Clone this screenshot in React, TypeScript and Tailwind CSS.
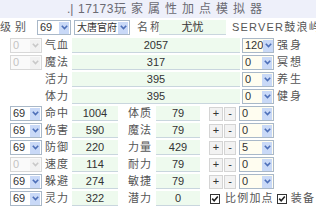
import type { ReactNode } from "react";

const font = { fontFamily: '"Liberation Sans", "Noto Sans CJK SC", sans-serif' };

function Arrow({ disabled = false }: { disabled?: boolean }) {
  return (
    <span
      className={`mr-[1px] flex h-[12px] w-[10px] shrink-0 items-center justify-center ${
        disabled ? "bg-[#f1f1f1]" : "bg-[#c9d9f7]"
      }`}
    >
      <svg width="7" height="5" viewBox="0 0 7 5">
        <path d="M0.8 0.8 L3.5 3.6 L6.2 0.8" fill="none" stroke={disabled ? "#c8c8c8" : "#4d6fb8"} strokeWidth="1.6" />
      </svg>
    </span>
  );
}

function Select({ value, w, disabled = false, cream = false, small = false }: { value: string; w: string; disabled?: boolean; cream?: boolean; small?: boolean }) {
  return (
    <div
      className={`flex h-[15px] shrink-0 items-center justify-between border ${w} ${
        disabled ? "border-[#d8d8d8] bg-[#fafafa] text-[#c4c4c4]" : cream ? "border-[#a9b8c8] bg-[#fffdf0] text-[#333]" : "border-[#a9b8c8] bg-white text-[#333]"
      }`}
    >
      <span className={`whitespace-nowrap pl-[2px] leading-none ${small ? "text-[10px]" : "text-[11px]"}`}>{value}</span>
      <Arrow disabled={disabled} />
    </div>
  );
}

function Field({ value, w, children }: { value?: string; w: string; children?: ReactNode }) {
  return (
    <div className={`flex h-[15px] shrink-0 items-center justify-center border-b border-[#c9d6de] bg-[#eefaee] text-[11px] leading-none text-[#333] ${w}`}>
      {children ?? value}
    </div>
  );
}

function Label({ text, w = "w-[27px]", pl = "pl-[3px]", track = "tracking-[1px]" }: { text: string; w?: string; pl?: string; track?: string }) {
  return <div className={`shrink-0 whitespace-nowrap text-[11px] leading-none text-[#555] ${track} ${w} ${pl}`}>{text}</div>;
}

function Btn({ t, w }: { t: string; w: string }) {
  return (
    <div className={`flex h-[14px] shrink-0 items-center justify-center border border-[#d4d4d4] bg-[#f2f2f2] text-[11px] leading-none text-[#333] ${w}`}>
      {t}
    </div>
  );
}

function Check() {
  return (
    <span className="flex h-[10px] w-[10px] shrink-0 items-center justify-center border border-[#333] bg-white">
      <svg width="8" height="8" viewBox="0 0 8 8">
        <path d="M1.2 3.6 L3.2 5.8 L6.8 1.6" fill="none" stroke="#222" strokeWidth="1.6" />
      </svg>
    </span>
  );
}

const topRows = [
  { sel: "0", label: "气血", value: "2057", right: "120", rlabel: "强身" },
  { sel: "0", label: "魔法", value: "317", right: "0", rlabel: "冥想" },
  { sel: "", label: "活力", value: "395", right: "0", rlabel: "养生" },
  { sel: "", label: "体力", value: "395", right: "0", rlabel: "健身" },
];

const bottomRows = [
  { sel: "69", label: "命中", value: "1004", label2: "体质", value2: "79", pick: "0" },
  { sel: "69", label: "伤害", value: "590", label2: "魔法", value2: "79", pick: "0" },
  { sel: "69", label: "防御", value: "220", label2: "力量", value2: "429", pick: "5" },
  { sel: "0", label: "速度", value: "114", label2: "耐力", value2: "79", pick: "0", off: true },
  { sel: "69", label: "躲避", value: "274", label2: "敏捷", value2: "79", pick: "0" },
];

const title = ["玩", "家", "属", "性", "加", "点", "模", "拟", "器"];

export default function App() {
  return (
    <div className="h-[206px] w-[316px] overflow-hidden bg-white" style={font}>
      <div className="flex h-[18px] items-center bg-[#eef0fa] pl-[67px] text-[12px] leading-none text-[#6a6a72]">
        <span className="w-[11px]">.|</span>
        <span className="tracking-[0.5px]">17173</span>
        <div className="flex gap-[5px]">
          {title.map((c) => (
            <span key={c}>{c}</span>
          ))}
        </div>
      </div>

      <div className="flex h-[19px] items-center">
        <Label text="级别" w="w-[37px]" pl="pl-0" track="tracking-[4px]" />
        <Select value="69" w="w-[34px]" />
        <div className="ml-[3px]">
          <Select value="大唐官府" w="w-[56px]" small />
        </div>
        <Label text="名称" w="w-[29px]" pl="pl-[7px]" track="tracking-[2px]" />
        <Field value="尤忧" w="w-[67px]" />
        <div className="ml-[6px] shrink-0 whitespace-nowrap text-[11px] leading-none tracking-[1.2px] text-[#555]">SERVER鼓浪屿</div>
      </div>

      {topRows.map((r) => (
        <div key={r.label} className="flex h-[17px] items-center pl-[10px]">
          {r.sel ? <Select value={r.sel} w="w-[32px]" disabled /> : <div className="w-[32px] shrink-0" />}
          <Label text={r.label} w="w-[30px]" />
          <Field value={r.value} w="w-[168px]" />
          <div className="ml-[2px]">
            <Select value={r.right} w="w-[32px]" cream />
          </div>
          <Label text={r.rlabel} w="w-[40px]" track="tracking-[2px]" />
        </div>
      ))}

      {bottomRows.map((r) => (
        <div key={r.label} className="flex h-[17px] items-center pl-[10px]">
          <Select value={r.sel} w="w-[32px]" disabled={r.off} />
          <Label text={r.label} w="w-[30px]" />
          <Field value={r.value} w="w-[46px]" />
          <Label text={r.label2} w="w-[38px]" pl="pl-[10px]" />
          <Field value={r.value2} w="w-[44px]" />
          <div className="ml-[9px] flex gap-[1px]">
            <Btn t="+" w="w-[14px]" />
            <Btn t="-" w="w-[12px]" />
          </div>
          <div className="ml-[3px]">
            <Select value={r.pick} w="w-[35px]" cream />
          </div>
        </div>
      ))}

      <div className="flex h-[17px] items-center pl-[10px]">
        <Select value="69" w="w-[32px]" />
        <Label text="灵力" w="w-[30px]" />
        <Field value="322" w="w-[46px]" />
        <Label text="潜力" w="w-[38px]" pl="pl-[10px]" />
        <Field value="0" w="w-[44px]" />
        <div className="ml-[10px] flex items-center whitespace-nowrap text-[11px] leading-none tracking-[1.2px] text-[#555]">
          <Check />
          <span className="ml-[5px]">比例加点</span>
          <span className="ml-[3px]">
            <Check />
          </span>
          <span className="ml-[4px]">装备</span>
        </div>
      </div>
    </div>
  );
}
